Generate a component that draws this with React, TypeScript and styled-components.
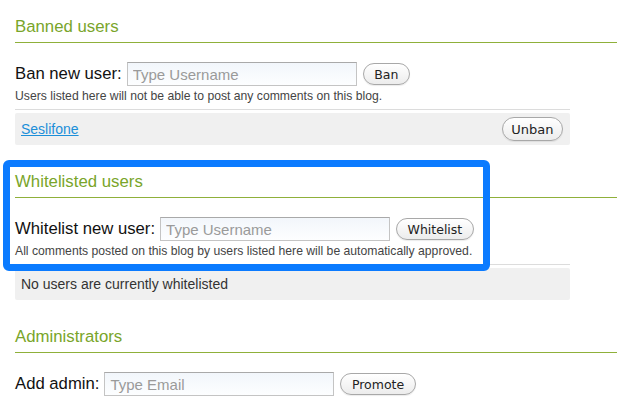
import React from 'react';
import styled, { createGlobalStyle } from 'styled-components';

const GlobalStyle = createGlobalStyle`
  html, body {
    margin: 0;
    padding: 0;
    background: #fff;
  }
  body {
    font-family: "Liberation Sans", Arial, Helvetica, sans-serif;
    color: #111;
    overflow: hidden;
  }
`;

const Page = styled.div`
  padding: 17px 0 0 15px;
`;

const Section = styled.section`
  position: relative;
  margin-bottom: 27px;
`;

const Heading = styled.h2`
  margin: 0;
  padding-bottom: 5px;
  font-size: 16.8px;
  line-height: 20px;
  font-weight: normal;
  color: #79a52a;
  border-bottom: 1px solid #8fb03a;
`;

const AddRow = styled.div`
  display: flex;
  align-items: center;
  height: 24px;
  margin-top: 19px;
`;

const Label = styled.label`
  font-size: 16.7px;
  color: #111;
  margin-right: 5px;
  white-space: nowrap;
`;

const TextInput = styled.input`
  box-sizing: border-box;
  width: 230px;
  height: 24px;
  padding: 0 5px;
  border: 1px solid #c4c4c4;
  border-top-color: #a9a9a9;
  background: linear-gradient(#f2f6fb, #fdfeff);
  font-family: "Liberation Sans", Arial, sans-serif;
  font-size: 15px;
  color: #222;
  outline: none;

  &::placeholder {
    color: #9a9a9a;
  }
`;

const PillButton = styled.button`
  box-sizing: border-box;
  height: 22px;
  margin-left: 6px;
  padding: 0 10.5px;
  border: 1px solid #a8a8a8;
  border-radius: 12px;
  background: linear-gradient(#ffffff, #ececec);
  box-shadow: 0 1px 1px rgba(0, 0, 0, 0.08);
  font-family: "DejaVu Sans", Verdana, sans-serif;
  font-size: 12.5px;
  color: #222;
  cursor: pointer;
`;

const Hint = styled.p`
  margin: 3px 0 0;
  font-size: 12.2px;
  line-height: 14px;
  color: #444;
`;

const List = styled.div`
  width: 555px;
  margin-top: 6px;
  padding-top: 3px;
  border-top: 1px solid #dcdcdc;
`;

const ListRow = styled.div`
  display: flex;
  justify-content: space-between;
  align-items: center;
  height: 32px;
  padding: 0 7px 0 6px;
  background: #f0f0f0;
  border-radius: 2px;
  font-size: 14px;
  color: #333;
`;

const UserLink = styled.a`
  color: #1c8fd9;
  text-decoration: underline;
  font-size: 14px;
`;

const RowButton = styled(PillButton)`
  height: 24px;
  padding: 0 8.5px;
  font-size: 13px;
`;

const Highlight = styled.div`
  position: absolute;
  left: -12px;
  top: -12px;
  width: 487px;
  height: 111px;
  box-sizing: border-box;
  border: 7px solid #0b7bff;
  border-radius: 6px;
  pointer-events: none;
`;

export default function App() {
  return (
    <>
      <GlobalStyle />
      <Page>
        <Section>
          <Heading>Banned users</Heading>
          <AddRow>
            <Label>Ban new user:</Label>
            <TextInput placeholder="Type Username" />
            <PillButton>Ban</PillButton>
          </AddRow>
          <Hint>Users listed here will not be able to post any comments on this blog.</Hint>
          <List>
            <ListRow>
              <UserLink href="#">Seslifone</UserLink>
              <RowButton>Unban</RowButton>
            </ListRow>
          </List>
        </Section>

        <Section>
          <Heading>Whitelisted users</Heading>
          <AddRow>
            <Label>Whitelist new user:</Label>
            <TextInput placeholder="Type Username" />
            <PillButton>Whitelist</PillButton>
          </AddRow>
          <Hint>All comments posted on this blog by users listed here will be automatically approved.</Hint>
          <List>
            <ListRow>No users are currently whitelisted</ListRow>
          </List>
          <Highlight />
        </Section>

        <Section>
          <Heading>Administrators</Heading>
          <AddRow>
            <Label>Add admin:</Label>
            <TextInput type="email" placeholder="Type Email" />
            <PillButton>Promote</PillButton>
          </AddRow>
          <List>
            <ListRow />
          </List>
        </Section>
      </Page>
    </>
  );
}
